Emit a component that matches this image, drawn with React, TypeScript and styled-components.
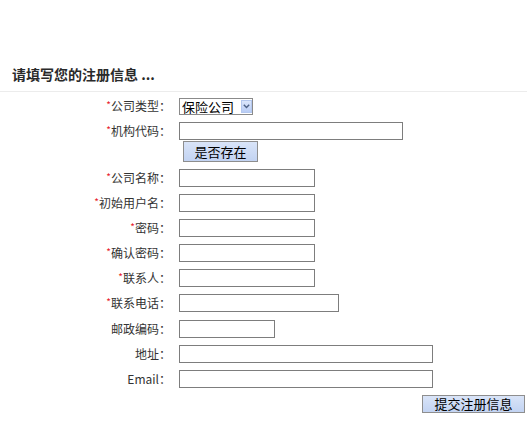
import React from "react";
import styled, { createGlobalStyle } from "styled-components";

const GlobalStyle = createGlobalStyle`
  body {
    margin: 0;
    background: #ffffff;
    font-family: "Noto Sans CJK SC", "Liberation Sans", sans-serif;
    font-size: 12px;
    color: #333333;
  }
`;

const Page = styled.div`
  width: 527px;
  height: 442px;
  overflow: hidden;
`;

const Header = styled.div`
  height: 92px;
  box-sizing: border-box;
  padding: 64px 0 0 12px;
  border-bottom: 1px solid #ececec;
`;

const Title = styled.h2`
  margin: 0;
  font-size: 14px;
  line-height: 20px;
  font-weight: bold;
  color: #2a2a2a;
`;

const Form = styled.form`
  display: flex;
  flex-direction: column;
  padding-top: 5px;
`;

const Field = styled.div<{ $gap: number }>`
  display: grid;
  grid-template-columns: 171px 1fr;
  column-gap: 8px;
  align-items: center;
  margin-bottom: ${(p) => p.$gap}px;
`;

const Label = styled.label`
  display: block;
  height: 18px;
  text-align: right;
  line-height: 18px;
  font-size: 12px;
  color: #333333;
  white-space: nowrap;
`;

const Req = styled.span`
  color: #e8202a;
  font-size: 10px;
  line-height: 10px;
  vertical-align: 2px;
`;

const TextInput = styled.input<{ $w: number }>`
  display: block;
  width: ${(p) => p.$w}px;
  height: 18px;
  box-sizing: border-box;
  border: 1px solid #7d7d7d;
  padding: 0 2px;
  margin: 0;
  font-size: 12px;
  background: #ffffff;
  outline: none;
`;

const SelectBox = styled.div`
  display: flex;
  align-items: center;
  width: 74px;
  height: 17px;
  box-sizing: border-box;
  border: 1px solid #8a8a8a;
  background: #ffffff;
`;

const NativeSelect = styled.select`
  appearance: none;
  border: 0;
  margin: 0;
  padding: 0 0 0 2px;
  width: 60px;
  height: 15px;
  font-family: "Noto Sans CJK SC", sans-serif;
  font-size: 13px;
  line-height: 15px;
  color: #000000;
  background: transparent;
  outline: none;
`;

const Arrow = styled.span`
  display: flex;
  align-items: center;
  justify-content: center;
  width: 11px;
  height: 13px;
  margin-left: 1px;
  background: linear-gradient(#dbe6fb, #b9cdf6);
  border: 1px solid #b4c8ef;
  box-sizing: border-box;
`;

const Spacer = styled.div``;

const Button = styled.button<{ $w: number; $h: number }>`
  display: block;
  width: ${(p) => p.$w}px;
  height: ${(p) => p.$h}px;
  box-sizing: border-box;
  margin: 0;
  padding: 0;
  border: 1px solid #8e8e8e;
  background: linear-gradient(#d9e4f8, #c2d3f2);
  font-family: "Noto Sans CJK SC", sans-serif;
  font-size: 13px;
  line-height: 1;
  color: #000000;
`;

const CheckButton = styled(Button)`
  margin-left: 4px;
`;

const SubmitRow = styled.div`
  display: flex;
  justify-content: flex-end;
  padding-right: 2px;
`;

const fields: { label: string; req: boolean; w: number }[] = [
  { label: "公司名称", req: true, w: 136 },
  { label: "初始用户名", req: true, w: 136 },
  { label: "密码", req: true, w: 136 },
  { label: "确认密码", req: true, w: 136 },
  { label: "联系人", req: true, w: 136 },
  { label: "联系电话", req: true, w: 160 },
  { label: "邮政编码", req: false, w: 96 },
  { label: "地址", req: false, w: 254 },
  { label: "Email", req: false, w: 254 },
];

const App: React.FC = () => {
  return (
    <Page>
      <GlobalStyle />
      <Header>
        <Title>请填写您的注册信息 ...</Title>
      </Header>
      <Form onSubmit={(e) => e.preventDefault()}>
        <Field $gap={7}>
          <Label>
            <Req>*</Req>公司类型：
          </Label>
          <SelectBox>
            <NativeSelect defaultValue="保险公司">
              <option>保险公司</option>
            </NativeSelect>
            <Arrow>
              <svg width="7" height="5" viewBox="0 0 7 5">
                <path d="M0.8 0.8 L3.5 3.6 L6.2 0.8" fill="none" stroke="#4d6185" strokeWidth="1.4" />
              </svg>
            </Arrow>
          </SelectBox>
        </Field>
        <Field $gap={1}>
          <Label>
            <Req>*</Req>机构代码：
          </Label>
          <TextInput $w={224} />
        </Field>
        <Field $gap={7}>
          <Spacer />
          <CheckButton type="button" $w={75} $h={21}>
            是否存在
          </CheckButton>
        </Field>
        {fields.map((f) => (
          <Field key={f.label} $gap={7.1}>
            <Label>
              {f.req && <Req>*</Req>}
              {f.label}：
            </Label>
            <TextInput $w={f.w} type={f.label.includes("密码") ? "password" : "text"} />
          </Field>
        ))}
        <SubmitRow>
          <Button type="submit" $w={103} $h={18}>
            提交注册信息
          </Button>
        </SubmitRow>
      </Form>
    </Page>
  );
};

export default App;
